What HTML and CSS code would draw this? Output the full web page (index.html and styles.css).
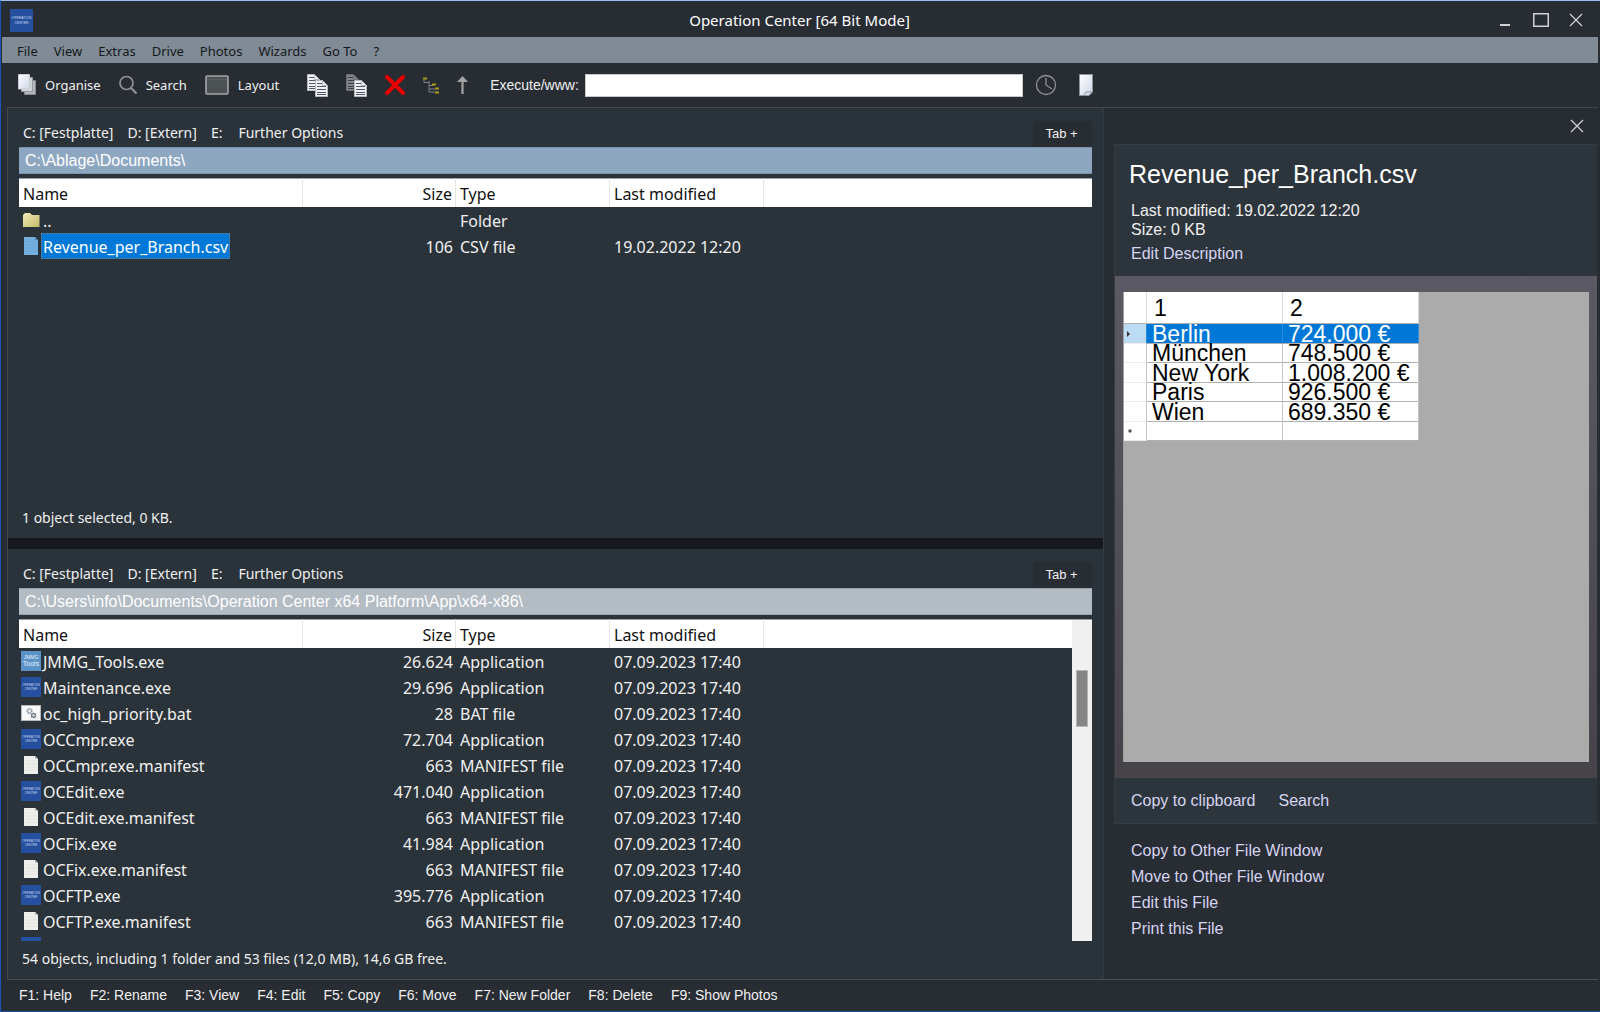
FILE: index.html
```
<!DOCTYPE html>
<html lang="en">
<head>
  <meta charset="UTF-8" />
  <meta name="viewport" content="width=device-width, initial-scale=1.0"/>
  <title>Operation Center [64 Bit Mode]</title>
  <link rel="stylesheet" href="styles.css">
</head>
<body>

  <!-- shared icons -->
  <svg class="sprite" aria-hidden="true">
    <defs>
      <linearGradient id="gPage" x1="0" y1="0" x2="1" y2="1">
        <stop offset="0" stop-color="#ffffff"/>
        <stop offset="1" stop-color="#cdd6ea"/>
      </linearGradient>
      <linearGradient id="gFolder" x1="0" y1="0" x2="1" y2="1">
        <stop offset="0" stop-color="#f3ecb8"/>
        <stop offset="1" stop-color="#c4b968"/>
      </linearGradient>
    </defs>
    <symbol id="oc" viewBox="0 0 20 20">
      <rect width="20" height="20" fill="#24509f"/>
      <text x="10" y="9" class="logo-text">OPERATION</text>
      <text x="10" y="13" class="logo-text">CENTER</text>
    </symbol>
    <symbol id="jmmg" viewBox="0 0 20 20">
      <rect width="20" height="20" fill="#5b93c8"/>
      <text x="10" y="8" class="logo-text jm">JMMG</text>
      <text x="10" y="15" class="logo-text tl">Tools</text>
    </symbol>
    <symbol id="bat" viewBox="0 0 20 20">
      <rect x=".5" y="2.5" width="19" height="15" fill="#f8f8f8" stroke="#b9b9b9"/>
      <circle cx="8.500" cy="8" r="2.200" fill="none" stroke="#8b98a5" stroke-width="1.800" stroke-dasharray="1.300 .5"/>
      <circle cx="12.500" cy="12.500" r="1.900" fill="none" stroke="#525d68" stroke-width="1.800" stroke-dasharray="1.300 .5"/>
    </symbol>
    <symbol id="doc" viewBox="0 0 20 20">
      <path d="M3 1h11l3 3v15H3z" fill="#eeeeec"/>
      <path d="M14 1v3h3z" fill="#b9b9b7"/>
      <path d="M4 6h12M4 9h12M4 12h12M4 15h12" stroke="#e2e2e0"/>
    </symbol>
    <symbol id="csv" viewBox="0 0 20 20">
      <path d="M3 1h11l3 3v15H3z" fill="#74afe0"/>
      <path d="M14 1v3h3z" fill="#4a82b5"/>
      <path d="M4 6h12M4 9h12M4 12h12M4 15h12" stroke="#6ba6d8"/>
    </symbol>
    <symbol id="folder" viewBox="0 0 20 20">
      <path d="M2 5l2-2h5l2 2h7.500v12H2z" fill="url(#gFolder)"/>
    </symbol>
    <symbol id="sheet" viewBox="0 0 13 17">
      <path d="M.5 .5h7l5 5v11H.5z" fill="#f1f2f5" stroke="#b6b8bc"/>
      <path d="M7.500 .5v5h5" fill="none" stroke="#b6b8bc"/>
      <path d="M2 3.500h5M2 6.500h9M2 9.500h9M2 12.500h9M2 14.500h9" stroke="#4e586e"/>
    </symbol>
    <symbol id="cross" viewBox="0 0 14 14">
      <path d="M1 1l12 12M13 1L1 13" stroke="#d0d0d0" stroke-width="1.300"/>
    </symbol>
  </svg>

  <div class="window">
    <header class="titlebar">
      <svg class="app-icon"><use href="#oc"/></svg>
      <h1>Operation Center [64 Bit Mode]</h1>
      <div class="win-buttons">
        <button aria-label="Minimize"><svg width="16" height="14"><path d="M3 12h10" stroke="#d0d0d0" stroke-width="2"/></svg></button>
        <button aria-label="Maximize"><svg width="16" height="14"><rect x=".75" y=".75" width="14.500" height="12.500" fill="none" stroke="#d0d0d0" stroke-width="1.500"/></svg></button>
        <button aria-label="Close"><svg width="14" height="14"><use href="#cross"/></svg></button>
      </div>
    </header>

    <nav class="menubar">
      <button>File</button>
      <button>View</button>
      <button>Extras</button>
      <button>Drive</button>
      <button>Photos</button>
      <button>Wizards</button>
      <button>Go To</button>
      <button>?</button>
    </nav>

    <div class="toolbar">
      <button class="tool">
        <svg width="18" height="22">
          <path d="M6.500 6.500h11v14h-11z" fill="#b4b7bd" stroke="#85898f"/>
          <path d="M3.500 3.500h11v14h-11z" fill="#cfd2d8" stroke="#96999f"/>
          <path d="M.5 .5h11v14.500h-11z" fill="url(#gPage)" stroke="#c9ccd2"/>
        </svg>
        <span>Organise</span>
      </button>
      <button class="tool">
        <svg width="18" height="20"><circle cx="7.500" cy="8" r="6.500" fill="none" stroke="#8f9294" stroke-width="1.700"/><path d="M12 13l5.500 5.500" stroke="#8f9294" stroke-width="2.200"/></svg>
        <span>Search</span>
      </button>
      <button class="tool">
        <svg width="24" height="20"><rect x="1" y="1" width="22" height="18" rx="1" fill="#4c5154" stroke="#a4a6a8" stroke-width="1.600"/><path d="M2 4.500h20" stroke="#5c6063"/></svg>
        <span>Layout</span>
      </button>
      <div class="tool-icons">
        <button aria-label="Copy"><svg width="21" height="23"><use href="#sheet" width="13" height="17"/><use href="#sheet" x="8" y="6" width="13" height="17"/></svg></button>
        <button aria-label="Move"><svg width="21" height="23"><use href="#sheet" width="13" height="17" opacity=".45"/><use href="#sheet" x="8" y="6" width="13" height="17"/></svg></button>
        <button aria-label="Delete"><svg width="20" height="20"><path d="M2 2l16 16M18 2L2 18" stroke="#e60000" stroke-width="4" stroke-linecap="round"/></svg></button>
        <button aria-label="Folder tree"><svg width="16" height="17"><path d="M1 2.500v3M1 5.500h5M6 4v11M6 8.500h4M6 12h6M6 15h6" fill="none" stroke="#7f8385"/><path d="M0 1.500h4M9 7.500h4M12 11.500h4M12 15.500h4" stroke="#a89d20" stroke-width="2"/></svg></button>
        <button aria-label="Up"><svg width="11" height="18"><path d="M5.500 18V4" stroke="#a3a3a3" stroke-width="2.200"/><path d="M0 6l5.500-6L11 6z" fill="#a3a3a3"/></svg></button>
      </div>
      <label for="execute">Execute/www:</label>
      <input type="text" id="execute">
      <div class="tool-end">
        <button aria-label="History"><svg width="22" height="22"><circle cx="11" cy="11" r="9.500" fill="none" stroke="#8e9193" stroke-width="1.300"/><path d="M11 4v7l6 4" fill="none" stroke="#8e9193" stroke-width="1.300"/></svg></button>
        <button aria-label="New document"><svg width="14" height="22"><path d="M.5 .5h13v17.500L10 21.500H.5z" fill="url(#gPage)" stroke="#8f9298"/><path d="M5 21l2-3h6" fill="none" stroke="#8f9298"/></svg></button>
      </div>
    </div>

    <main class="content">
      <div class="panes">
        <section class="pane">
          <div class="drives">
            <button>C: [Festplatte]</button>
            <button>D: [Extern]</button>
            <button>E:</button>
            <button class="further">Further Options</button>
            <button class="tab">Tab +</button>
          </div>
          <input class="path" type="text" aria-label="Path" value="C:\Ablage\Documents\">
          <div class="list">
            <div class="rows">
              <table class="files">
                <colgroup><col class="c-name"><col class="c-size"><col class="c-type"><col class="c-date"><col></colgroup>
                <thead>
                  <tr><th>Name</th><th class="num">Size</th><th>Type</th><th>Last modified</th><th></th></tr>
                </thead>
                <tbody>
                  <tr><td><div class="file"><svg><use href="#folder"/></svg><span>..</span></div></td><td></td><td>Folder</td><td></td><td></td></tr>
                  <tr class="selected"><td><div class="file"><svg><use href="#csv"/></svg><span>Revenue_per_Branch.csv</span></div></td><td class="num">106</td><td>CSV file</td><td>19.02.2022 12:20</td><td></td></tr>
                </tbody>
              </table>
            </div>
          </div>
          <div class="status">1 object selected, 0 KB.</div>
        </section>

        <div class="splitter"></div>

        <section class="pane inactive">
          <div class="drives">
            <button>C: [Festplatte]</button>
            <button>D: [Extern]</button>
            <button>E:</button>
            <button class="further">Further Options</button>
            <button class="tab">Tab +</button>
          </div>
          <input class="path" type="text" aria-label="Path" value="C:\Users\info\Documents\Operation Center x64 Platform\App\x64-x86\">
          <div class="list">
            <div class="rows">
              <table class="files">
                <colgroup><col class="c-name"><col class="c-size"><col class="c-type"><col class="c-date"><col></colgroup>
                <thead>
                  <tr><th>Name</th><th class="num">Size</th><th>Type</th><th>Last modified</th><th></th></tr>
                </thead>
                <tbody>
                  <tr><td><div class="file"><svg><use href="#jmmg"/></svg><span>JMMG_Tools.exe</span></div></td><td class="num">26.624</td><td>Application</td><td>07.09.2023 17:40</td><td></td></tr>
                  <tr><td><div class="file"><svg><use href="#oc"/></svg><span>Maintenance.exe</span></div></td><td class="num">29.696</td><td>Application</td><td>07.09.2023 17:40</td><td></td></tr>
                  <tr><td><div class="file"><svg><use href="#bat"/></svg><span>oc_high_priority.bat</span></div></td><td class="num">28</td><td>BAT file</td><td>07.09.2023 17:40</td><td></td></tr>
                  <tr><td><div class="file"><svg><use href="#oc"/></svg><span>OCCmpr.exe</span></div></td><td class="num">72.704</td><td>Application</td><td>07.09.2023 17:40</td><td></td></tr>
                  <tr><td><div class="file"><svg><use href="#doc"/></svg><span>OCCmpr.exe.manifest</span></div></td><td class="num">663</td><td>MANIFEST file</td><td>07.09.2023 17:40</td><td></td></tr>
                  <tr><td><div class="file"><svg><use href="#oc"/></svg><span>OCEdit.exe</span></div></td><td class="num">471.040</td><td>Application</td><td>07.09.2023 17:40</td><td></td></tr>
                  <tr><td><div class="file"><svg><use href="#doc"/></svg><span>OCEdit.exe.manifest</span></div></td><td class="num">663</td><td>MANIFEST file</td><td>07.09.2023 17:40</td><td></td></tr>
                  <tr><td><div class="file"><svg><use href="#oc"/></svg><span>OCFix.exe</span></div></td><td class="num">41.984</td><td>Application</td><td>07.09.2023 17:40</td><td></td></tr>
                  <tr><td><div class="file"><svg><use href="#doc"/></svg><span>OCFix.exe.manifest</span></div></td><td class="num">663</td><td>MANIFEST file</td><td>07.09.2023 17:40</td><td></td></tr>
                  <tr><td><div class="file"><svg><use href="#oc"/></svg><span>OCFTP.exe</span></div></td><td class="num">395.776</td><td>Application</td><td>07.09.2023 17:40</td><td></td></tr>
                  <tr><td><div class="file"><svg><use href="#doc"/></svg><span>OCFTP.exe.manifest</span></div></td><td class="num">663</td><td>MANIFEST file</td><td>07.09.2023 17:40</td><td></td></tr>
                  <tr><td><div class="file"><svg><use href="#oc"/></svg></div></td><td></td><td></td><td></td><td></td></tr>
                </tbody>
              </table>
            </div>
            <div class="scrollbar"><div class="thumb"></div></div>
          </div>
          <div class="status">54 objects, including 1 folder and 53 files (12,0 MB), 14,6 GB free.</div>
        </section>
      </div>

      <aside class="preview">
        <div class="preview-top">
          <button aria-label="Close preview"><svg width="14" height="14"><use href="#cross"/></svg></button>
        </div>
        <div class="card">
          <div class="card-head">
            <h2>Revenue_per_Branch.csv</h2>
            <p>Last modified: 19.02.2022 12:20</p>
            <p>Size: 0 KB</p>
            <a href="#">Edit Description</a>
          </div>
          <div class="viewer">
            <div class="sheet">
              <table class="grid">
                <colgroup><col class="g-mark"><col class="g-cell"><col class="g-cell"></colgroup>
                <thead>
                  <tr><th></th><th>1</th><th>2</th></tr>
                </thead>
                <tbody>
                  <tr class="current"><td><svg width="4" height="6"><path d="M0 0l3 3-3 3z" fill="#333"/></svg></td><td>Berlin</td><td>724.000 €</td></tr>
                  <tr><td></td><td>München</td><td>748.500 €</td></tr>
                  <tr><td></td><td>New York</td><td>1.008.200 €</td></tr>
                  <tr><td></td><td>Paris</td><td>926.500 €</td></tr>
                  <tr><td></td><td>Wien</td><td>689.350 €</td></tr>
                  <tr><td><svg width="6" height="6"><circle cx="3" cy="3" r="1.700" fill="#555"/></svg></td><td></td><td></td></tr>
                </tbody>
              </table>
            </div>
          </div>
          <div class="card-foot">
            <a href="#">Copy to clipboard</a>
            <a href="#">Search</a>
          </div>
        </div>
        <div class="actions">
          <a href="#">Copy to Other File Window</a>
          <a href="#">Move to Other File Window</a>
          <a href="#">Edit this File</a>
          <a href="#">Print this File</a>
        </div>
      </aside>
    </main>

    <footer class="fkeys">
      <button>F1: Help</button>
      <button>F2: Rename</button>
      <button>F3: View</button>
      <button>F4: Edit</button>
      <button>F5: Copy</button>
      <button>F6: Move</button>
      <button>F7: New Folder</button>
      <button>F8: Delete</button>
      <button>F9: Show Photos</button>
    </footer>
  </div>

</body>
</html>
```
FILE: styles.css
```
* {
  box-sizing: border-box;
}

html, body {
  margin: 0;
  padding: 0;
  height: 100%;
  overflow: hidden;
  font-family: 'Segoe UI', 'Noto Sans', sans-serif;
  background: #282c33;
  color: #f0f0f0;
}

button {
  background: none;
  border: none;
  padding: 0;
  color: inherit;
  font: inherit;
  cursor: pointer;
}

svg {
  display: block;
  flex: none;
}

.sprite {
  position: absolute;
  width: 0;
  height: 0;
}

.logo-text {
  font-family: 'Liberation Sans', Arial, sans-serif;
  font-size: 3px;
  fill: #c9d6ee;
  text-anchor: middle;
}

.logo-text.jm {
  font-size: 5px;
  fill: #e6f0fa;
}

.logo-text.tl {
  font-size: 7px;
  fill: #e6f0fa;
}

.window {
  height: 100vh;
  display: flex;
  flex-direction: column;
  border-top: 1px solid #9dbdf0;
  border-left: 1px solid #1c53b4;
  border-bottom: 1px solid #1f4f9e;
  padding: 0 2px 0 1px;
}

/* title */
.titlebar {
  height: 36px;
  display: flex;
  align-items: center;
  padding: 2px 15px 0 8px;
}

.app-icon {
  width: 23px;
  height: 23px;
}

.titlebar h1 {
  flex: 1;
  margin: 0;
  padding-left: 69px;
  text-align: center;
  font-size: 15px;
  font-weight: normal;
  color: #ffffff;
}

.win-buttons {
  display: flex;
  gap: 20px;
}

/* menu */
.menubar {
  height: 26px;
  display: flex;
  gap: 16px;
  padding: 2px 15px 0;
  background: #808b95;
  color: #15181b;
  font-size: 13px;
}

/* toolbar */
.toolbar {
  height: 44px;
  display: flex;
  align-items: center;
  gap: 18px;
  padding: 0 0 0 16px;
  font-size: 13px;
}

.tool {
  display: flex;
  align-items: center;
  gap: 9px;
}

.tool-icons {
  display: flex;
  align-items: center;
  gap: 18px;
  margin: 0 4px 0 10px;
}

.toolbar label {
  font-family: 'Liberation Sans', Arial, sans-serif;
  font-size: 14px;
  margin-right: -12px;
}

.toolbar input {
  flex: 1;
  height: 23px;
  border: 1px solid #c8c8c8;
  background: #ffffff;
  padding: 0 4px;
}

.tool-end {
  display: flex;
  align-items: center;
  gap: 22px;
  margin-left: -6px;
  width: 563px;
}

/* main area */
.content {
  flex: 1;
  min-height: 0;
  display: flex;
  border-top: 1px solid #43474c;
  border-bottom: 1px solid #4a4d53;
  margin-left: 5px;
}

.panes {
  flex: 1;
  min-width: 0;
  display: flex;
  flex-direction: column;
  background: #2b333a;
  border-left: 1px solid #43474c;
  border-right: 1px solid #353b41;
}

.pane {
  flex: 1;
  min-height: 0;
  display: flex;
  flex-direction: column;
  padding: 0 11px 0 11px;
}

.splitter {
  height: 11px;
  background: #15181c;
}

.drives {
  height: 39px;
  display: flex;
  align-items: flex-end;
  gap: 14px;
  padding-left: 4px;
  font-size: 14px;
}

.drives button {
  height: 30px;
}

.drives .further {
  margin-left: 2px;
}

.drives .tab {
  margin-left: auto;
  width: 59px;
  height: 26px;
  padding: 0 2px 2px 0;
  background: #282c33;
  font-family: 'Liberation Sans', Arial, sans-serif;
  font-size: 13px;
}

.path {
  width: 100%;
  height: 27px;
  border: 1px solid #7d93ab;
  border-width: 1px 0;
  background: #8ea7c1;
  color: #ffffff;
  font-family: 'Liberation Sans', Arial, sans-serif;
  font-size: 16px;
  padding: 0 6px;
}

.inactive .path {
  background: #b3bbc3;
  border-color: #9ba4ad;
}

.list {
  flex: 1;
  min-height: 0;
  display: flex;
  margin-top: 4px;
}

.rows {
  flex: 1;
  min-width: 0;
  overflow: hidden;
}

.files {
  width: 100%;
  table-layout: fixed;
  border-collapse: separate;
  border-spacing: 0;
  font-size: 16px;
  line-height: 24px;
  white-space: nowrap;
}

.c-name { width: 284px; }
.c-size { width: 153px; }
.c-type { width: 154px; }
.c-date { width: 154px; }

.files th {
  height: 29px;
  padding: 2px 4px 0;
  background: #ffffff;
  border-top: 1px solid #9a9fa5;
  border-right: 1px solid #e6e6e6;
  color: #111111;
  font-weight: normal;
  text-align: left;
}

.files th:last-child {
  border-right: none;
}

.files td {
  height: 26px;
  padding: 2px 4px 0;
}

.files .num {
  text-align: right;
  padding-right: 3px;
}

.files td:first-child {
  padding: 0 2px;
}

.file {
  display: flex;
  align-items: center;
  height: 26px;
}

.file svg {
  width: 20px;
  height: 20px;
}

.file span {
  padding: 2px 2px 0;
}

.selected .file span {
  background: #0078d7;
  color: #ffffff;
  outline: 1px dotted #7a7d7a;
  outline-offset: -1px;
}

.scrollbar {
  width: 20px;
  background: #f0f0f0;
  border-top: 1px solid #9a9fa5;
  padding: 50px 4px 0;
}

.thumb {
  height: 57px;
  background: #858585;
  border: 1px solid #b5b5b5;
}

.status {
  height: 38px;
  line-height: 36px;
  padding-left: 3px;
  font-size: 14px;
}

/* preview */
.preview {
  width: 494px;
  padding: 0 1px 0 10px;
  font-family: 'Liberation Sans', Arial, sans-serif;
  font-size: 16px;
  line-height: 19px;
  display: flex;
  flex-direction: column;
}

.preview a {
  color: #d6d4f2;
  text-decoration: none;
}

.preview-top {
  height: 36px;
  display: flex;
  justify-content: flex-end;
  align-items: center;
  padding-right: 13px;
}

.card {
  background: #2d353c;
  border: 1px solid #363c42;
  border-right: none;
}

.card-head {
  padding: 14px 16px 13px;
}

.card-head h2 {
  margin: 0 0 12px -2px;
  font-size: 25px;
  line-height: 30px;
  font-weight: normal;
  color: #ffffff;
}

.card-head p {
  margin: 0;
}

.card-head a {
  display: block;
  margin-top: 5px;
}

.viewer {
  height: 502px;
  padding: 16px 8px;
  background: linear-gradient(#5b5963, #464449);
}

.sheet {
  height: 100%;
  background: #ababab;
  border-left: 1px solid #a0a0a0;
}

.grid {
  width: 295px;
  table-layout: fixed;
  border-collapse: separate;
  border-spacing: 0;
  background: #ffffff;
  color: #000000;
  font-size: 23px;
  line-height: 18px;
  white-space: nowrap;
}

.g-mark { width: 23px; }

.grid th {
  height: 32px;
  padding: 0 7px;
  font-weight: normal;
  text-align: left;
  border-right: 1px solid #dcdcdc;
  border-bottom: 1px solid #b0b0b0;
}

.grid td {
  height: 20px;
  padding: 0 5px;
  border-right: 1px solid #c4c4c4;
  border-bottom: 1px solid #b0b0b0;
}

.grid tr:nth-child(even) td {
  height: 19px;
}

.grid tr td:first-child {
  padding: 0 3px;
  border-bottom-color: #ececec;
}

.grid .current td {
  background: #0078d7;
  border-right-color: #2f8bd8;
  color: #ffffff;
}

.grid .current td:first-child {
  background: #bcdcf4;
}

.card-foot {
  height: 45px;
  display: flex;
  gap: 23px;
  align-items: center;
  padding-left: 16px;
}

.actions {
  display: flex;
  flex-direction: column;
  gap: 7px;
  padding: 17px;
}

/* function keys */
.fkeys {
  height: 31px;
  display: flex;
  gap: 18px;
  padding: 0 0 1px 17px;
  font-family: 'Liberation Sans', Arial, sans-serif;
  font-size: 14px;
}
```
